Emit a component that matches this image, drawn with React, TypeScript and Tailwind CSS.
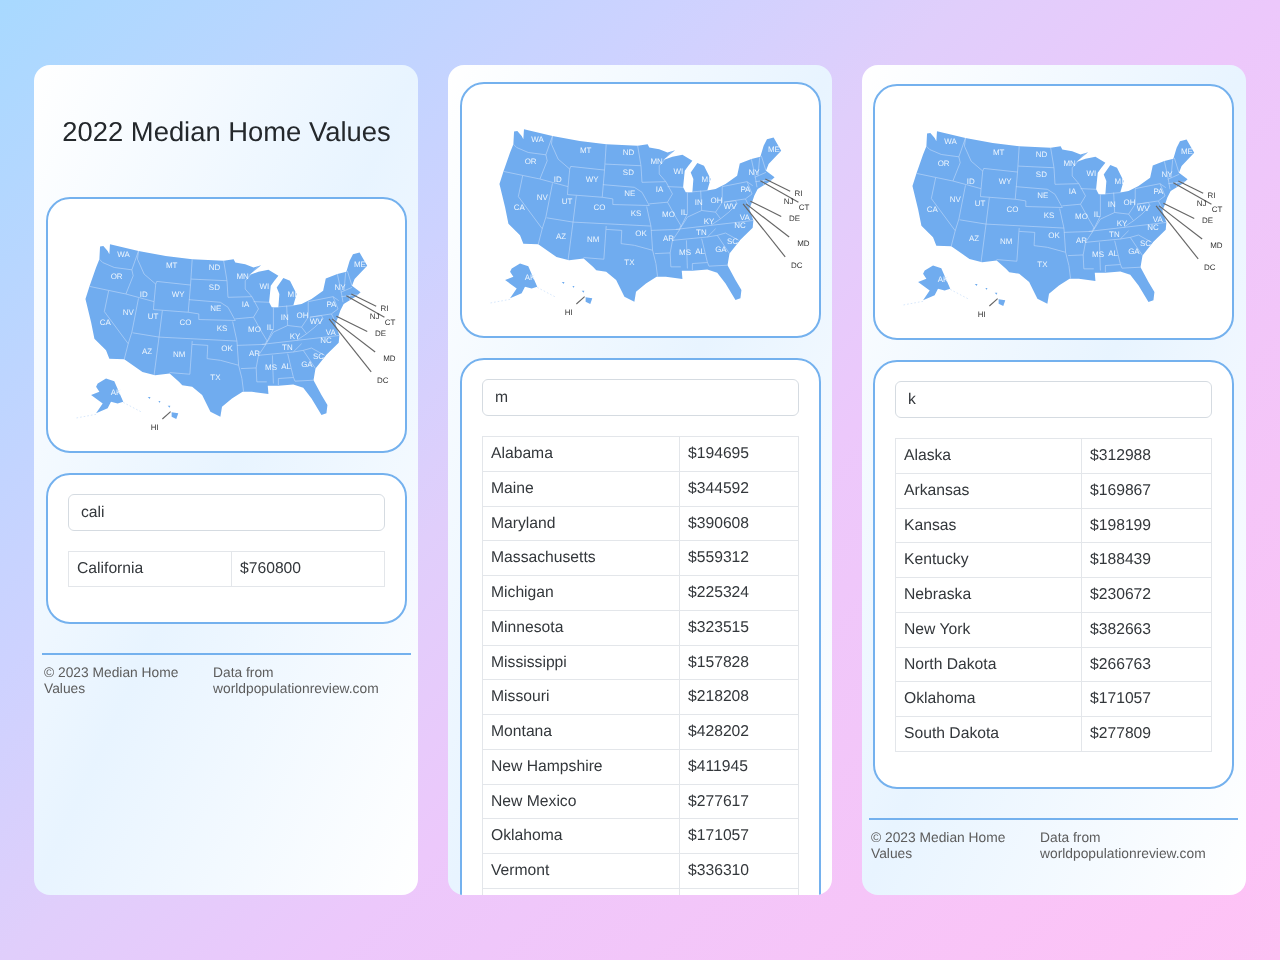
import { useId } from "react";

const silhouette =
  "162,152 172,150 185,165 190,175 192,145 278,165 360,180 440,190 535,195 565,190 570,200 600,205 625,215 648,208 612,238 640,228 670,222 700,240 688,255 677,270 672,320 680,335 700,335 703,295 695,275 715,247 735,255 755,295 745,330 770,325 800,310 835,285 843,248 878,235 905,228 915,195 925,175 945,170 968,210 930,250 922,270 948,290 935,302 897,325 887,345 880,365 872,385 884,420 882,442 845,478 812,520 806,555 830,600 848,630 845,655 830,660 800,610 775,578 745,568 700,572 668,572 670,597 620,590 592,590 560,610 530,635 525,665 495,650 470,600 440,575 410,570 400,560 372,535 328,540 290,530 235,492 190,490 180,465 145,430 135,380 118,310 130,272 150,215 160,190";

const borders: string[] = [
  "160,190 170,200 205,215 258,222",
  "278,165 258,222 262,240 240,295",
  "130,272 240,295 325,318",
  "188,285 175,348 247,445 235,492",
  "278,308 258,410 247,445",
  "278,165 275,190 295,235 330,265 325,318 323,342 428,350 435,268 333,257 330,265",
  "440,190 435,268",
  "437,250 545,255",
  "535,195 545,255 548,305",
  "430,312 525,320 548,335 570,375",
  "428,350 460,355 460,372 570,375",
  "350,345 340,425",
  "260,412 340,425 575,437",
  "340,425 325,540",
  "440,437 433,537 372,532",
  "440,447 487,450 485,490 525,495 580,510",
  "562,378 575,437 580,510 590,550 595,590",
  "575,450 660,447",
  "570,370 625,365",
  "548,305 620,303",
  "640,210 600,255 600,280 620,303 640,340 625,365 650,410 665,435 660,450 640,480 633,518 635,560 665,560",
  "587,520 633,518",
  "625,318 672,320",
  "685,335 685,400 665,440",
  "685,335 745,330",
  "725,330 728,390",
  "660,450 685,410 728,390 770,395 790,365",
  "790,318 790,365",
  "650,447 755,435 884,420",
  "640,480 745,470 770,445",
  "682,480 685,565",
  "728,475 745,545 750,558",
  "700,570 700,550 745,547",
  "750,558 806,555",
  "745,470 775,465 812,520",
  "775,465 800,458 840,480",
  "755,435 785,415 770,395",
  "785,415 810,395 835,370 830,360 795,365",
  "795,365 860,355 875,385",
  "790,318 865,303 880,340 860,355",
  "878,235 890,290 895,320",
  "903,230 898,285",
  "908,225 922,270",
  "888,290 922,275",
  "890,303 940,297",
  "915,298 915,315",
  "865,303 882,315",
];

const islands: string[] = [
  "155,565 180,550 205,558 232,620 215,625 195,620 185,640 150,655 170,625 135,600 160,590 150,575",
  "378,652 398,655 392,672 378,665",
  "306,606 314,606 312,612",
  "338,618 344,618 342,624",
  "366,632 374,632 372,638",
];

const lightLabels: [string, number, number][] = [
  ["WA", 233, 175], ["MT", 378, 210], ["ND", 507, 214], ["OR", 212, 243], ["ID", 294, 297],
  ["WY", 398, 296], ["SD", 507, 276], ["MN", 592, 241], ["WI", 658, 271], ["ME", 946, 205],
  ["NV", 247, 349], ["UT", 322, 363], ["CO", 420, 382], ["NE", 511, 338], ["IA", 601, 325],
  ["CA", 178, 380], ["KS", 530, 398], ["MO", 628, 403], ["IL", 675, 395], ["IN", 719, 364],
  ["OH", 773, 358], ["MI", 741, 295], ["PA", 860, 325], ["NY", 886, 275], ["WV", 814, 378],
  ["VA", 858, 412], ["KY", 750, 424], ["NC", 844, 436], ["TN", 727, 457], ["AZ", 304, 467],
  ["NM", 401, 476], ["OK", 545, 459], ["AR", 628, 474], ["SC", 821, 483], ["GA", 786, 507],
  ["AL", 723, 512], ["MS", 678, 516], ["TX", 510, 545], ["AK", 210, 592],
];

const darkLabels: [string, number, number][] = [
  ["RI", 1020, 338], ["NJ", 990, 363], ["CT", 1037, 381], ["DE", 1008, 414],
  ["MD", 1035, 490], ["DC", 1015, 555], ["HI", 327, 698],
];

const leaders: [number, number, number, number][] = [
  [920, 295, 995, 332], [905, 300, 1020, 365], [875, 362, 968, 408],
  [862, 370, 992, 470], [853, 370, 980, 530], [350, 672, 375, 650],
];

function UsMap() {
  const id = useId();
  return (
    <svg viewBox="5 9 1077 759" className="block h-full w-full">
      <defs>
        <clipPath id={id}>
          <polygon points={silhouette} />
        </clipPath>
      </defs>
      <polygon points={silhouette} fill="#70acef" />
      <g clipPath={`url(#${id})`}>
        {borders.map((p, i) => (
          <polyline key={i} points={p} fill="none" stroke="#c8def9" strokeWidth={1.7} strokeLinejoin="round" />
        ))}
      </g>
      {islands.map((p, i) => (
        <polygon key={i} points={p} fill="#70acef" />
      ))}
      <path d="M232 622 L285 650 M150 658 L85 670" stroke="#d8e8fb" strokeWidth={3} strokeDasharray="5 6" fill="none" />
      {leaders.map(([a, b, c, d], i) => (
        <line key={i} x1={a} y1={b} x2={c} y2={d} stroke="#666" strokeWidth={3.5} />
      ))}
      {lightLabels.map(([t, x, y]) => (
        <text key={t} x={x} y={y} dy={8} textAnchor="middle" fontSize={24} fill="#eef6fe" fontFamily="'Liberation Sans', sans-serif">
          {t}
        </text>
      ))}
      {darkLabels.map(([t, x, y]) => (
        <text key={t} x={x} y={y} dy={8} textAnchor="middle" fontSize={24} fill="#333" fontFamily="'Liberation Sans', sans-serif">
          {t}
        </text>
      ))}
    </svg>
  );
}

function MapBox() {
  return (
    <div className="h-[256px] w-[361px] shrink-0 overflow-hidden rounded-[24px] border-2 border-[#74b1ee] bg-white">
      <UsMap />
    </div>
  );
}

function SearchBox({ query, rows, col }: { query: string; rows: [string, string][]; col: string }) {
  return (
    <div className="mt-5 w-[361px] shrink-0 rounded-[24px] border-2 border-[#74b1ee] bg-white px-5 pt-[19px] pb-[35px]">
      <div className="flex h-[37px] items-center rounded-md border border-[#d5dbe1] px-3 text-[15.7px] text-[#33373b]">{query}</div>
      <table className="mt-5 w-full table-fixed border-collapse text-[15.7px] text-[#33373b]">
        <tbody>
          {rows.map(([a, b], i) => (
            <tr key={i} className="h-[34.75px]">
              <td className={`${col} border border-[#e3e6ea] px-2 py-0`}>{a}</td>
              <td className="border border-[#e3e6ea] px-2 py-0">{b}</td>
            </tr>
          ))}
        </tbody>
      </table>
    </div>
  );
}

function Footer() {
  return (
    <div className="-ml-1 mr-1 mt-[29px] flex w-[369px] border-t-2 border-[#74b1ee] pt-[10px] text-[13.8px] leading-4 text-[#5c5c5c]">
      <div className="w-[169px] shrink-0 pl-0.5 pr-2">© 2023 Median Home Values</div>
      <div className="pl-0.5">
        Data from
        <br />
        worldpopulationreview.com
      </div>
    </div>
  );
}

const cardClass =
  "h-[830px] w-[384px] shrink-0 overflow-hidden rounded-2xl bg-gradient-to-br from-white via-[#e8f4ff] to-white";

export default function App() {
  return (
    <div
      className="flex h-[960px] w-full justify-center gap-[30px] bg-[linear-gradient(135deg,#a8d9ff_0%,#cdd2ff_30%,#e0cefb_43%,#ecc8fb_57%,#ffc2f5_100%)] pt-[65px] blur-[0.3px] [text-rendering:geometricPrecision]"
      style={{ fontFamily: "'Liberation Sans', Arial, sans-serif" }}
    >
      <div className={`${cardClass} pl-3`}>
        <h1 className="flex h-[132px] w-[361px] items-center justify-center pt-0.5 text-[27.4px] font-normal text-[#24282c]">
          2022 Median Home Values
        </h1>
        <MapBox />
        <SearchBox query="cali" col="w-[163px]" rows={[["California", "$760800"]]} />
        <Footer />
      </div>
      <div className={`${cardClass} pl-3 pt-[17px]`}>
        <MapBox />
        <SearchBox
          query="m"
          col="w-[197px]"
          rows={[
            ["Alabama", "$194695"],
            ["Maine", "$344592"],
            ["Maryland", "$390608"],
            ["Massachusetts", "$559312"],
            ["Michigan", "$225324"],
            ["Minnesota", "$323515"],
            ["Mississippi", "$157828"],
            ["Missouri", "$218208"],
            ["Montana", "$428202"],
            ["New Hampshire", "$411945"],
            ["New Mexico", "$277617"],
            ["Oklahoma", "$171057"],
            ["Vermont", "$336310"],
            ["", ""],
          ]}
        />
      </div>
      <div className={`${cardClass} pl-[11px] pt-[19px]`}>
        <MapBox />
        <SearchBox
          query="k"
          col="w-[186px]"
          rows={[
            ["Alaska", "$312988"],
            ["Arkansas", "$169867"],
            ["Kansas", "$198199"],
            ["Kentucky", "$188439"],
            ["Nebraska", "$230672"],
            ["New York", "$382663"],
            ["North Dakota", "$266763"],
            ["Oklahoma", "$171057"],
            ["South Dakota", "$277809"],
          ]}
        />
        <Footer />
      </div>
    </div>
  );
}
